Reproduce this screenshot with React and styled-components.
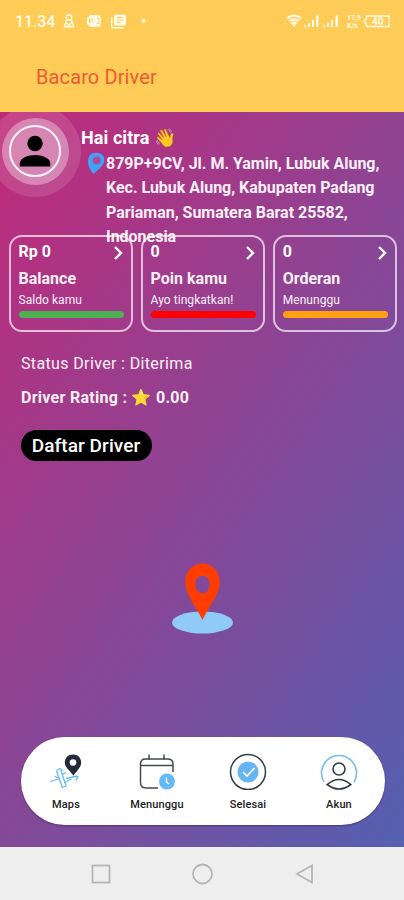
import React from "react";
import styled, { createGlobalStyle } from "styled-components";

const GlobalStyle = createGlobalStyle`
  * {
    box-sizing: border-box;
  }
  body {
    margin: 0;
    font-family: Roboto, "Noto Color Emoji", sans-serif;
  }
`;

const Screen = styled.div`
  width: 404px;
  height: 900px;
  display: flex;
  flex-direction: column;
  overflow: hidden;
`;

const TopArea = styled.header`
  height: 112px;
  background: #ffcd57;
`;

const StatusBar = styled.div`
  height: 42px;
  padding: 0 12px 0 15px;
  display: flex;
  justify-content: space-between;
  align-items: center;
  color: #fffbe8;
`;

const StatusGroup = styled.div`
  display: flex;
  align-items: center;
`;

const Clock = styled.span`
  width: 48px;
  font-size: 16px;
  font-weight: 500;
  letter-spacing: -0.1px;
`;

const AppTitle = styled.h1`
  margin: 0;
  padding: 21px 0 0 36px;
  font-size: 20px;
  line-height: 28px;
  font-weight: 400;
  letter-spacing: 0.12px;
  color: #ee5a33;
`;

const Content = styled.main`
  height: 735px;
  display: flex;
  flex-direction: column;
  background: linear-gradient(125deg, #c12a79, #5460b1);
  color: #fdf0f8;
`;

const Profile = styled.section`
  height: 123px;
  display: flex;
`;

const AvatarHalo = styled.div`
  flex: none;
  width: 92px;
  height: 92px;
  margin: -7px 0 0 -11px;
  border-radius: 50%;
  display: flex;
  justify-content: center;
  align-items: center;
  background: rgba(255, 255, 255, 0.12);
  clip-path: inset(7px 0 0 11px);
`;

const AvatarRing = styled.div`
  width: 67px;
  height: 67px;
  border-radius: 50%;
  display: flex;
  justify-content: center;
  align-items: center;
  background: rgba(255, 255, 255, 0.34);
`;

const Avatar = styled.div`
  width: 52px;
  height: 52px;
  border: 2px solid #fff3fb;
  border-radius: 50%;
  display: flex;
  justify-content: center;
  align-items: center;
`;

const ProfileText = styled.div`
  flex: none;
  width: 310px;
  padding-top: 13px;
`;

const Greeting = styled.div`
  height: 27px;
  font-size: 18px;
  line-height: 25px;
  font-weight: 700;
  letter-spacing: 0.08px;
  color: #fff;
`;

const Address = styled.div`
  display: flex;
  align-items: flex-start;
  padding-left: 6px;

  svg {
    flex: none;
  }
`;

const AddressText = styled.p`
  margin: 0;
  width: 284px;
  font-size: 16px;
  line-height: 24.3px;
  font-weight: 700;
  letter-spacing: -0.02px;
`;

const Cards = styled.section`
  height: 97px;
  padding: 0 7px 0 8.5px;
  display: flex;
  justify-content: space-between;
`;

const CardBox = styled.div`
  width: 124.3px;
  height: 97px;
  padding: 4px 7px 0 8px;
  border: 2px solid rgba(255, 255, 255, 0.68);
  border-radius: 13px;
`;

const CardTop = styled.div`
  height: 24px;
  display: flex;
  justify-content: space-between;
  align-items: center;
  font-size: 16px;
  line-height: 22px;
  font-weight: 700;
  color: #fff;
`;

const CardTopValue = styled.span`
  height: 24px;
`;

const CardTitle = styled.div`
  height: 27px;
  font-size: 16px;
  line-height: 27px;
  font-weight: 700;
  white-space: nowrap;
`;

const CardNote = styled.div`
  height: 19px;
  font-size: 12px;
  line-height: 17px;
  letter-spacing: 0.05px;
  white-space: nowrap;
`;

const CardBar = styled.div`
  width: 105px;
  height: 7px;
  border-radius: 4px;
  background: ${(props) => props.$color};
`;

const Details = styled.section`
  height: 130px;
  padding: 20px 0 0 21px;
`;

const StatusLine = styled.div`
  height: 24px;
  font-size: 16px;
  line-height: 24px;
  letter-spacing: 0.36px;
`;

const RatingLine = styled.div`
  height: 24px;
  margin-top: 10px;
  font-size: 16px;
  line-height: 24px;
  font-weight: 700;
  letter-spacing: 0.28px;
`;

const RegisterButton = styled.button`
  display: block;
  margin-top: 20px;
  width: 131px;
  height: 31px;
  padding: 0 1px 0 0;
  border: 0;
  border-radius: 16px;
  background: #000;
  color: #fff;
  font-family: inherit;
  font-size: 19px;
  line-height: 30px;
  font-weight: 500;
  letter-spacing: 0.08px;
  white-space: nowrap;
`;

const MapPin = styled.div`
  flex: 1;
  display: flex;
  justify-content: center;
  padding: 101px 0 0 1px;
`;

const TabBar = styled.nav`
  flex: none;
  width: 364px;
  height: 88px;
  margin: 0 0 22px 20.5px;
  border-radius: 44px;
  background: #fff;
  box-shadow: 0 1px 2px rgba(40, 10, 60, 0.4);
  display: grid;
  grid-template-columns: repeat(4, 91px);
`;

const Tab = styled.div`
  display: flex;
  flex-direction: column;
  align-items: center;
  padding-top: 15px;
  font-size: 11px;
  line-height: 16px;
  font-weight: 500;
  letter-spacing: 0.12px;
  color: #222;

  svg {
    margin-bottom: 7px;
  }
`;

const SystemNav = styled.footer`
  flex: 1;
  display: flex;
  justify-content: center;
  align-items: center;
  gap: 77px;
  background: #eeeeee;
`;

const StatusIcons = () => (
  <svg width="86" height="18" viewBox="0 0 86 18" fill="none">
    <g stroke="currentColor" strokeWidth="1.4">
      <circle cx="6" cy="5.5" r="2.7" />
      <path d="M3.6 7.6 1.5 14.7h9.2L8.4 7.6M3 11l5 3.5M9 10l-4 4" />
    </g>
    <rect x="25" y="3" width="13" height="12" rx="4" fill="currentColor" />
    <rect x="24" y="5" width="8" height="8" rx="1" fill="currentColor" />
    <path d="M26.5 11V7h2a1.2 1.2 0 0 1 0 2.5h-2M34 6.5h2v5h-2" stroke="#ffcd57" strokeWidth="1" />
    <rect x="51" y="2.5" width="12" height="11" rx="2" fill="currentColor" />
    <path d="M48.7 5v9.2q0 1.6 1.6 1.6H60.5" stroke="currentColor" strokeWidth="1.5" />
    <path d="M53.5 5.5h7M53.5 8h7M53.5 10.5h4" stroke="#ffcd57" strokeWidth="1" />
    <circle cx="80.5" cy="9" r="2" fill="currentColor" />
  </svg>
);

const SignalIcons = () => (
  <svg width="106" height="18" viewBox="0 0 106 18" fill="none">
    <g stroke="currentColor" strokeWidth="2.2">
      <path d="M1 6.3q7-5.4 14 0M3.2 9.1q4.8-3.6 9.6 0M5.5 11.6q2.5-1.8 5 0" />
    </g>
    <path d="m6 12.5 2 2.5 2-2.5z" fill="currentColor" />
    <g fill="currentColor">
      <path d="M18 13h2v2h-2zM22 11h2v4h-2zM26 8h2v7h-2zM30 3h2.4v12H30z" />
      <path d="M37 13h2v2h-2zM41 11h2v4h-2zM45 8h2v7h-2zM49.5 3h2.4v12h-2.4z" />
    </g>
    <g fill="currentColor" fontSize="7" fontWeight="700" fontFamily="Roboto, sans-serif">
      <text x="61" y="8">17,9</text>
      <text x="61" y="16">K/s</text>
    </g>
    <path d="M80.5 4h22.7v10.5H80.5V12L78 9.3 80.5 6.5z" stroke="currentColor" strokeWidth="1.4" />
    <text x="86" y="12.5" fill="currentColor" fontSize="10" fontWeight="700" fontFamily="Roboto, sans-serif">
      40
    </text>
  </svg>
);

const PersonIcon = () => (
  <svg width="32" height="32" viewBox="0 0 32 32">
    <circle cx="16" cy="8.5" r="7.7" fill="#000" />
    <path d="M.8 31.5v-3C.8 23 9 20 16 20s15.300 3 15.300 8.500v3z" fill="#000" />
  </svg>
);

const BluePinIcon = () => (
  <svg width="19" height="23" viewBox="0 0 19 23">
    <path
      fill="#41a1f3"
      d="M9 .8c5.5-.2 8.8 3.5 8.3 8.2C16.8 14 10.5 18 6.5 22 3.6 18.5.8 14.5 1 9 1.2 4 4 1 9 .8"
    />
    <circle cx="9.6" cy="8.5" r="3.9" fill="#b0479a" />
  </svg>
);

const Chevron = () => (
  <svg width="12" height="16" viewBox="0 0 12 16" fill="none">
    <path d="m3 2 6 6-6 6" stroke="#fff" strokeWidth="2.4" />
  </svg>
);

const PinIllustration = () => (
  <svg width="62" height="72" viewBox="0 0 62 72">
    <ellipse cx="30.5" cy="59.5" rx="30.5" ry="11" fill="#90caf9" />
    <path
      fill="#ff3d00"
      fillRule="evenodd"
      d="M30.5 .5c10 0 17.3 8.2 17.3 18.3C47.8 32 37 43 30.500 57 24 43 13.200 32 13.200 18.800 13.200 8.700 20.500 .5 30.500 .5M30.500 12.500a7.400 9 0 1 0 0 18 7.400 9 0 0 0 0-18"
    />
  </svg>
);

const MapsIcon = () => (
  <svg width="36" height="38" viewBox="0 0 36 38" fill="none">
    <path
      fill="#252c39"
      fillRule="evenodd"
      d="M25 2.5c5 0 8.2 3.5 8.2 8.3 0 4.7-5 8.5-7.7 13-3-4.5-8.7-8.5-8.7-13 0-4.8 3.2-8.3 8.2-8.3M25 7.200a3.300 3.300 0 1 0 0 6.600 3.300 3.300 0 0 0 0-6.600"
    />
    <g stroke="#67b9f5" strokeWidth="1.3">
      <path d="m2.500 29.500 9-3M6.500 24l5 2.500M18 26.500l11.500-2.500M16.500 30.500l7-3.500M30 24l-2 4.500" />
      <path d="m8.500 19 6 16.500M13 18.500l5 15.500M8.500 18.500l3.500-2 2.500 2M13.500 35.500l5-1.500M14 22.500l4-2" />
    </g>
  </svg>
);

const CalendarIcon = () => (
  <svg width="38" height="38" viewBox="0 0 38 38" fill="none">
    <g stroke="#454950" strokeWidth="1.5">
      <path d="M20 36H8q-5.5 0-5.5-5.5V12Q2.5 7 7.5 7h22Q35 7 35 12v8M2.5 13.5H35" />
      <path d="M11 2.5v5M26 2.5v5" />
    </g>
    <circle cx="29" cy="29.5" r="8" fill="#64b9f8" />
    <path d="M28.5 25.5V30l2.5 2" stroke="#fff" strokeWidth="1.3" />
  </svg>
);

const CheckIcon = () => (
  <svg width="38" height="38" viewBox="0 0 38 38" fill="none">
    <circle cx="19" cy="20" r="17.5" stroke="#363d47" strokeWidth="1.5" />
    <circle cx="19" cy="20" r="10.5" fill="#64b5f6" />
    <path d="m14 20 4 4 7.5-8" stroke="#fff" strokeWidth="1.7" />
  </svg>
);

const AccountIcon = () => (
  <svg width="38" height="38" viewBox="0 0 38 38" fill="none">
    <path d="M4 30A17.5 17.5 0 1 1 34 30" stroke="#74bdf3" strokeWidth="1.6" />
    <circle cx="19" cy="17" r="6" stroke="#343b45" strokeWidth="1.6" />
    <path d="M7.2 32.5q11.8-10 23.6 0-11.8 9-23.6 0z" stroke="#343b45" strokeWidth="1.6" />
  </svg>
);

const NavIcon = ({ children }) => (
  <svg width="24" height="24" viewBox="0 0 24 24" fill="none" stroke="#b5b5b5" strokeWidth="1.8">
    {children}
  </svg>
);

const cards = [
  { value: "Rp 0", title: "Balance", note: "Saldo kamu", color: "#4caf50" },
  { value: "0", title: "Poin kamu", note: "Ayo tingkatkan!", color: "#ff0000" },
  { value: "0", title: "Orderan", note: "Menunggu", color: "#ffa010" },
];

const tabs = [
  { label: "Maps", icon: <MapsIcon /> },
  { label: "Menunggu", icon: <CalendarIcon /> },
  { label: "Selesai", icon: <CheckIcon /> },
  { label: "Akun", icon: <AccountIcon /> },
];

function App() {
  return (
    <Screen>
      <GlobalStyle />
      <TopArea>
        <StatusBar>
          <StatusGroup>
            <Clock>11.34</Clock>
            <StatusIcons />
          </StatusGroup>
          <SignalIcons />
        </StatusBar>
        <AppTitle>Bacaro Driver</AppTitle>
      </TopArea>
      <Content>
        <Profile>
          <AvatarHalo>
            <AvatarRing>
              <Avatar>
                <PersonIcon />
              </Avatar>
            </AvatarRing>
          </AvatarHalo>
          <ProfileText>
            <Greeting>Hai citra 👋</Greeting>
            <Address>
              <BluePinIcon />
              <AddressText>
                879P+9CV, Jl. M. Yamin, Lubuk Alung, Kec. Lubuk Alung, Kabupaten
                Padang Pariaman, Sumatera Barat 25582, Indonesia
              </AddressText>
            </Address>
          </ProfileText>
        </Profile>
        <Cards>
          {cards.map((card) => (
            <CardBox key={card.title}>
              <CardTop>
                <CardTopValue>{card.value}</CardTopValue>
                <Chevron />
              </CardTop>
              <CardTitle>{card.title}</CardTitle>
              <CardNote>{card.note}</CardNote>
              <CardBar $color={card.color} />
            </CardBox>
          ))}
        </Cards>
        <Details>
          <StatusLine>Status Driver : Diterima</StatusLine>
          <RatingLine>Driver Rating : ⭐ 0.00</RatingLine>
          <RegisterButton>Daftar Driver</RegisterButton>
        </Details>
        <MapPin>
          <PinIllustration />
        </MapPin>
        <TabBar>
          {tabs.map((tab) => (
            <Tab key={tab.label}>
              {tab.icon}
              {tab.label}
            </Tab>
          ))}
        </TabBar>
      </Content>
      <SystemNav>
        <NavIcon>
          <rect x="3.5" y="3.5" width="17" height="17" />
        </NavIcon>
        <NavIcon>
          <circle cx="12.5" cy="12" r="9.5" />
        </NavIcon>
        <NavIcon>
          <path d="M21 3.5v17L6 12z" />
        </NavIcon>
      </SystemNav>
    </Screen>
  );
}

export default App;
